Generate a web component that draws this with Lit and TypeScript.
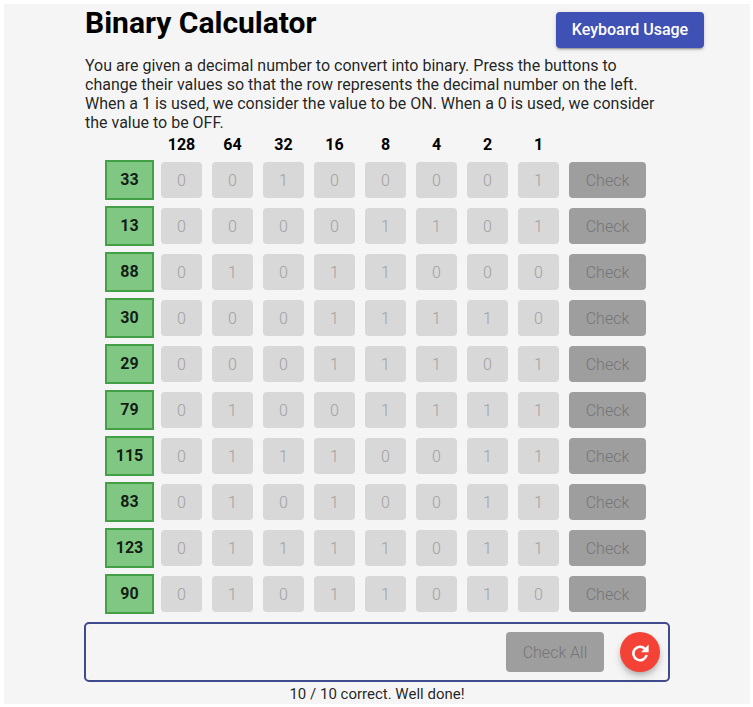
import { LitElement, html, css } from "lit";
import { customElement, state } from "lit/decorators.js";

const WEIGHTS = [128, 64, 32, 16, 8, 4, 2, 1];

@customElement("app-root")
export class AppRoot extends LitElement {
  @state() private numbers = [33, 13, 88, 30, 29, 79, 115, 83, 123, 90];

  static styles = css`
    :host {
      display: block;
      box-sizing: border-box;
      padding: 4px 3px 3px 4px;
      background: #fff;
      color: rgba(0, 0, 0, 0.87);
      font: 400 16px/19px Roboto, "Liberation Sans", sans-serif;
    }
    .page {
      background: #f5f5f5;
      min-height: 700px;
    }
    main {
      display: flex;
      flex-direction: column;
      max-width: 586px;
      margin: 0 auto;
    }
    header {
      display: flex;
      justify-content: space-between;
      align-items: flex-start;
      margin-right: -34px;
      padding-bottom: 8px;
    }
    h1 {
      margin: 0;
      padding-left: 1px;
      font-size: 30px;
      line-height: 38px;
      font-weight: 700;
      color: #000;
    }
    button {
      font: inherit;
      border: 0;
      padding: 0;
      border-radius: 4px;
    }
    .usage {
      margin-top: 8px;
      width: 148px;
      height: 36px;
      padding-bottom: 2px;
      font-weight: 500;
      color: #fff;
      background: #3f51b5;
      box-shadow: 0 3px 1px -2px rgba(0, 0, 0, 0.2), 0 2px 2px rgba(0, 0, 0, 0.14),
        0 1px 5px rgba(0, 0, 0, 0.12);
    }
    .intro {
      margin: 0;
      padding-left: 1px;
    }
    table {
      margin-left: 21px;
      width: 546px;
      table-layout: fixed;
      border-collapse: collapse;
    }
    th,
    td {
      box-sizing: border-box;
      padding: 0 5px;
      font-weight: 700;
      text-align: center;
    }
    thead th {
      height: 25px;
      padding: 0;
      color: #000;
    }
    tbody td,
    tbody th {
      height: 46px;
    }
    tbody th {
      padding: 0 2px 0 0;
    }
    .col-action {
      width: 87px;
    }
    .decimal {
      display: block;
      box-sizing: border-box;
      height: 40px;
      line-height: 36px;
      border: 2px solid #43a047;
      background: #81c784;
      color: rgba(0, 0, 0, 0.87);
    }
    .bit,
    .check {
      display: block;
      width: 100%;
      height: 36px;
      font-weight: 300;
    }
    .bit {
      background: #d8d8d8;
      color: #a0a0a0;
    }
    .check,
    .check-all {
      background: #9e9e9e;
      color: #757575;
      font-weight: 300;
    }
    .panel {
      display: flex;
      justify-content: flex-end;
      align-items: center;
      gap: 16px;
      margin-top: 5px;
      padding: 8px;
      border: 2px solid #3f4b8c;
      border-radius: 5px;
    }
    .check-all {
      width: 98px;
      height: 40px;
    }
    .reset {
      display: grid;
      place-items: center;
      width: 40px;
      height: 40px;
      border-radius: 50%;
      color: #fff;
      background: #f44336;
      box-shadow: 0 3px 5px -1px rgba(0, 0, 0, 0.2), 0 5px 8px rgba(0, 0, 0, 0.14);
    }
    .reset svg {
      display: block;
      width: 20px;
      height: 20px;
    }
    .result {
      margin: 0;
      padding-top: 3px;
      font-size: 15px;
      text-align: center;
    }
  `;

  render() {
    return html`
      <div class="page">
        <main>
          <header>
            <h1>Binary Calculator</h1>
            <button class="usage" type="button">Keyboard Usage</button>
          </header>
          <p class="intro">
            You are given a decimal number to convert into binary. Press the buttons to
            change their values so that the row represents the decimal number on the left.
            When a 1 is used, we consider the value to be ON. When a 0 is used, we consider
            the value to be OFF.
          </p>
          <table>
            <colgroup>
              <col />
              ${WEIGHTS.map(() => html`<col />`)}
              <col class="col-action" />
            </colgroup>
            <thead>
              <tr>
                <td></td>
                ${WEIGHTS.map((w) => html`<th scope="col">${w}</th>`)}
                <td></td>
              </tr>
            </thead>
            <tbody>
              ${this.numbers.map(
                (n) => html`
                  <tr>
                    <th scope="row"><span class="decimal">${n}</span></th>
                    ${WEIGHTS.map(
                      (w) => html`<td>
                        <button class="bit" type="button" disabled>${n & w ? 1 : 0}</button>
                      </td>`
                    )}
                    <td><button class="check" type="button" disabled>Check</button></td>
                  </tr>
                `
              )}
            </tbody>
          </table>
          <div class="panel">
            <button class="check-all" type="button" disabled>Check All</button>
            <button class="reset" type="button" aria-label="Restart">
              <svg viewBox="0 0 20 20" fill="none" aria-hidden="true">
                <path
                  d="M14.9 6.8A6.7 6.7 0 1 0 16.6 13"
                  stroke="currentColor"
                  stroke-width="2.6"
                />
                <path d="M18.6 2.6v7.6H11z" fill="currentColor" />
              </svg>
            </button>
          </div>
          <p class="result">${this.numbers.length} / ${this.numbers.length} correct. Well done!</p>
        </main>
      </div>
    `;
  }
}
